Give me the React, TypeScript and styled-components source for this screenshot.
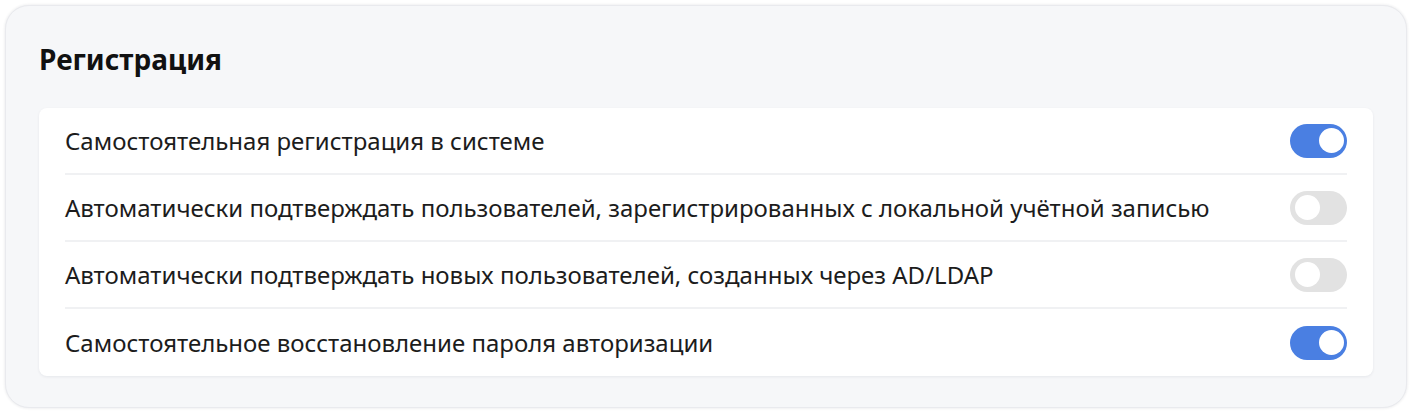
import React, { useState } from "react";
import styled, { createGlobalStyle } from "styled-components";

const GlobalStyle = createGlobalStyle`
  html, body { margin: 0; padding: 0; background: #ffffff; }
  body { font-family: "Noto Sans", "Open Sans", sans-serif; color: #1a1a1a; }
  * { box-sizing: border-box; }
`;

const Page = styled.div`
  padding: 5px;
  width: 1412px;
`;

const Section = styled.section`
  background: #f6f7f9;
  border: 1px solid #e9eaee;
  box-shadow: 0 0 3px rgba(30, 40, 60, 0.12);
  border-radius: 24px;
  padding: 35px 33px 33px 33px;
  height: 403px;
  width: 1402px;
`;

const Title = styled.h2`
  margin: 0;
  font-size: 28px;
  font-weight: 700;
  line-height: 36px;
  color: #111111;
`;

const List = styled.div`
  margin-top: 31px;
  background: #ffffff;
  border-radius: 8px;
  box-shadow: 0 1px 3px rgba(20, 30, 60, 0.07);
  padding: 0 26px;
  display: flex;
  flex-direction: column;
`;

const Row = styled.div<{ $last?: boolean }>`
  display: flex;
  align-items: center;
  justify-content: space-between;
  height: 67px;
  border-bottom: ${(p) => (p.$last ? "none" : "2px solid #f0f1f3")};
`;

const Label = styled.span`
  font-size: 24px;
  line-height: 32px;
  color: #1c1c1c;
`;

const Track = styled.button<{ $on: boolean }>`
  position: relative;
  width: 57px;
  height: 34px;
  border-radius: 17px;
  border: none;
  padding: 0;
  cursor: pointer;
  background: ${(p) => (p.$on ? "#4a7fe2" : "#e2e2e2")};
  flex-shrink: 0;
`;

const Knob = styled.span<{ $on: boolean }>`
  position: absolute;
  top: 4.5px;
  left: ${(p) => (p.$on ? "28.5px" : "4.5px")};
  width: 25px;
  height: 25px;
  border-radius: 50%;
  background: #ffffff;
`;

const items = [
  { text: "Самостоятельная регистрация в системе", on: true },
  { text: "Автоматически подтверждать пользователей, зарегистрированных с локальной учётной записью", on: false },
  { text: "Автоматически подтверждать новых пользователей, созданных через AD/LDAP", on: false },
  { text: "Самостоятельное восстановление пароля авторизации", on: true },
];

export default function App() {
  const [state, setState] = useState(items.map((i) => i.on));
  return (
    <>
      <GlobalStyle />
      <Page>
        <Section>
          <Title>Регистрация</Title>
          <List>
            {items.map((it, i) => (
              <Row key={i} $last={i === items.length - 1}>
                <Label>{it.text}</Label>
                <Track
                  $on={state[i]}
                  onClick={() => setState((s) => s.map((v, j) => (j === i ? !v : v)))}
                >
                  <Knob $on={state[i]} />
                </Track>
              </Row>
            ))}
          </List>
        </Section>
      </Page>
    </>
  );
}
